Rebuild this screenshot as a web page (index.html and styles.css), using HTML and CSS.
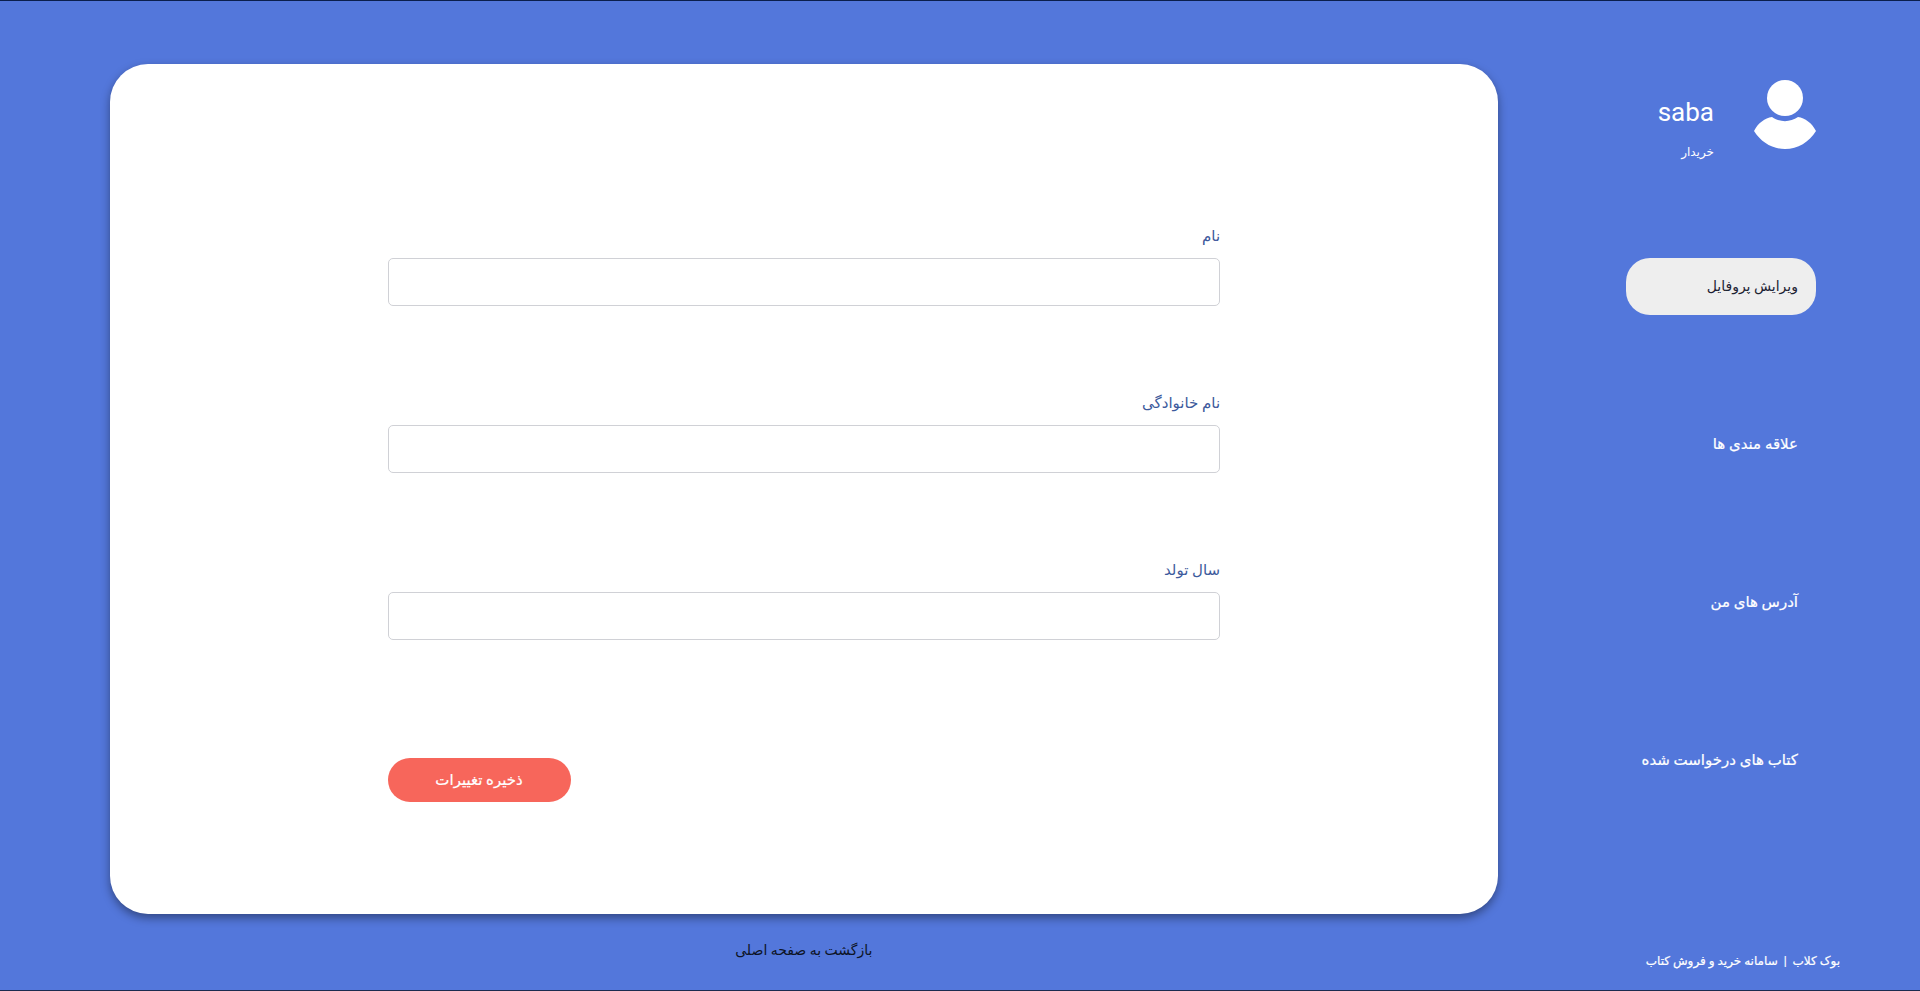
FILE: index.html
```html
<!DOCTYPE html>
<html lang="fa" dir="rtl">
<head>
  <meta charset="utf-8">
  <meta name="viewport" content="width=device-width, initial-scale=1">
  <title>ویرایش پروفایل</title>
  <link rel="stylesheet" href="styles.css">
</head>
<body class="page">
  <aside class="sidebar">
    <div class="user">
      <svg class="avatar" viewBox="0 0 62 70" aria-hidden="true">
        <circle cx="31" cy="18" r="18"/>
        <path d="M0 51C4 43 11 38 18 37C26 42.500 36 42.500 44 37C51 38 58 43 62 51C55 62 44 69 31 69C18 69 7 62 0 51Z"/>
      </svg>
      <div class="user-info">
        <div class="user-name">saba</div>
        <div class="user-role">خریدار</div>
      </div>
    </div>
    <nav class="menu">
      <a class="menu-link menu-link-active" href="#profile">ویرایش پروفایل</a>
      <a class="menu-link" href="#favorites">علاقه مندی ها</a>
      <a class="menu-link" href="#addresses">آدرس های من</a>
      <a class="menu-link" href="#requests">کتاب های درخواست شده</a>
    </nav>
    <footer class="brand">بوک کلاب &nbsp;|&nbsp; سامانه خرید و فروش کتاب</footer>
  </aside>
  <main class="content">
    <section class="card">
      <form class="form">
        <div class="field">
          <label class="label" for="first-name">نام</label>
          <input class="input" id="first-name" type="text">
        </div>
        <div class="field">
          <label class="label" for="last-name">نام خانوادگی</label>
          <input class="input" id="last-name" type="text">
        </div>
        <div class="field">
          <label class="label" for="birth-year">سال تولد</label>
          <input class="input" id="birth-year" type="text">
        </div>
        <button class="save" type="submit">ذخیره تغییرات</button>
      </form>
    </section>
    <a class="back" href="#home">بازگشت به صفحه اصلی</a>
  </main>
</body>
</html>
```
FILE: styles.css
```css
* {
  box-sizing: border-box;
}

.page {
  display: grid;
  grid-template-columns: 22% 1fr;
  min-height: 100vh;
  margin: 0;
  border-top: 1px solid #0b1f4d;
  border-bottom: 1px solid #1c2b4f;
  background: #5377db;
  color: #ffffff;
  font-family: Roboto, "DejaVu Sans", sans-serif;
  font-size: 15px;
  line-height: 24px;
}

.sidebar {
  display: flex;
  flex-direction: column;
  padding: 79px 104px 17px 80px;
}

.user {
  display: flex;
  gap: 40px;
}

.avatar {
  width: 62px;
  height: 70px;
  fill: #ffffff;
}

.user-info {
  padding-top: 16px;
}

.user-name {
  font-size: 26px;
  line-height: 32px;
}

.user-role {
  margin-top: 12px;
  font-size: 12px;
  line-height: 24px;
}

.menu {
  display: flex;
  flex-direction: column;
  gap: 101px;
  width: 190px;
  margin-top: 94px;
}

.menu-link {
  padding: 16px 18px;
  border-radius: 24px;
  color: #ffffff;
  line-height: 25px;
  text-decoration: none;
  white-space: nowrap;
  -webkit-text-stroke: 0.2px currentColor;
}

.menu-link-active {
  background: #eeeeee;
  color: #1d2333;
  font-size: 14px;
  -webkit-text-stroke: 0;
}

.brand {
  margin: auto -24px 0;
  font-size: 12px;
  white-space: nowrap;
  -webkit-text-stroke: 0.2px currentColor;
}

.content {
  display: flex;
  flex-direction: column;
  align-items: center;
  padding: 63px 0 28px 110px;
}

.card {
  display: flex;
  justify-content: center;
  flex: 1;
  width: 100%;
  border-radius: 38px;
  background: #ffffff;
  box-shadow: 0 4px 10px rgba(0, 0, 0, 0.4);
}

.form {
  display: flex;
  flex-direction: column;
  width: 60%;
  padding: 160px 0 112px;
}

.field {
  display: flex;
  flex-direction: column;
  gap: 10px;
  margin-bottom: 85px;
}

.label {
  color: #3d5a9c;
}

.input {
  width: 100%;
  height: 48px;
  padding: 0 12px;
  border: 1px solid #d0d1d6;
  border-radius: 5px;
  background: #ffffff;
  font: inherit;
}

.save {
  align-self: flex-end;
  width: 183px;
  height: 44px;
  margin-top: 33px;
  border: 0;
  border-radius: 22px;
  background: #f7665b;
  color: #ffffff;
  font: inherit;
  -webkit-text-stroke: 0.2px currentColor;
}

.back {
  margin-top: 24px;
  color: #0d1426;
  font-size: 14px;
  text-decoration: none;
}
```
